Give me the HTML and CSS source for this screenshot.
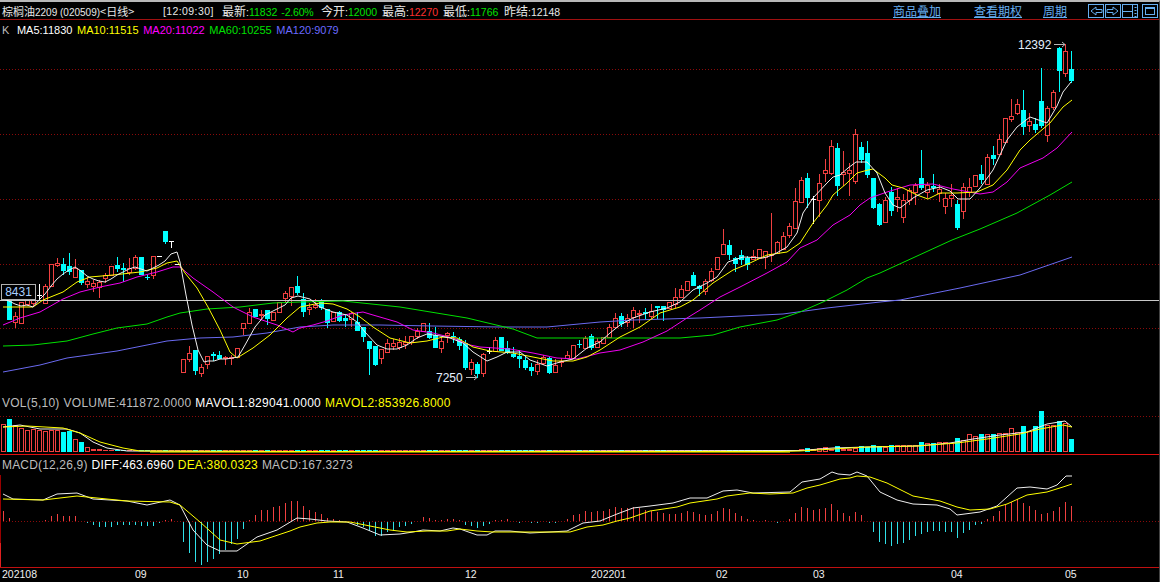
FILE: index.html
```html
<!DOCTYPE html>
<html lang="zh-CN">
<head>
<meta charset="utf-8">
<title>棕榈油2209 日线</title>
<link rel="stylesheet" href="styles.css">
</head>
<body>
<div class="app">
  <header class="top">
    <span class="title"><span class="cn">棕榈油</span><span class="sm">2209 (020509)</span><span class="cn">&lt;日线&gt;</span></span>
    <span class="time">[12:09:30]</span>
    <span class="stat s1"><span class="cn">最新</span>:<b class="up">11832</b><b class="up pct">-2.60%</b></span>
    <span class="stat s2"><span class="cn">今开</span>:<b class="up">12000</b></span>
    <span class="stat s3"><span class="cn">最高</span>:<b class="red">12270</b></span>
    <span class="stat s3"><span class="cn">最低</span>:<b class="up">11766</b></span>
    <span class="stat s3"><span class="cn">昨结</span>:<b class="plain">12148</b></span>
    <nav class="links">
      <a class="link l1">商品叠加</a>
      <a class="link l2">查看期权</a>
      <a class="link l3">周期</a>
    </nav>
    <div class="tools">
      <svg class="tool" viewBox="0 0 16 14"><rect x=".5" y=".5" width="15" height="13"/><path d="M14 5.500H8V3L3 7l5 4V8.500h6z"/></svg>
      <svg class="tool" viewBox="0 0 16 14"><rect x=".5" y=".5" width="15" height="13"/><path d="M2 5.500h6V3l5 4-5 4V8.500H2z"/></svg>
      <svg class="tool" viewBox="0 0 16 14"><rect x=".5" y=".5" width="15" height="13"/><path d="M.5 7.500h10M10.500 .5v13M12.500 3.500h2M12.500 6.500h2M12.500 9.500h2M12.500 12.500h2"/></svg>
      <svg class="tool gap" viewBox="0 0 16 14"><rect x=".5" y=".5" width="15" height="13"/><rect x="3.500" y="3.500" width="9" height="7"/><path d="M3.500 4.500h9"/></svg>
    </div>
  </header>

  <section class="pane">
    <div class="legend ma">
      <span class="gray">K</span>
      <span class="white k1">MA5:11830</span>
      <span class="yellow">MA10:11515</span>
      <span class="magenta">MA20:11022</span>
      <span class="green">MA60:10255</span>
      <span class="blue">MA120:9079</span>
    </div>
    <div class="chart">
      <svg id="main" class="plot main" viewBox="0 39 1159 355"></svg>
      <div class="price">8431</div>
    </div>
  </section>

  <section class="pane">
    <div class="legend ind vol">
      <span class="gray">VOL(5,10)</span>
      <span class="gray">VOLUME:411872.0000</span>
      <span class="white">MAVOL1:829041.0000</span>
      <span class="yellow">MAVOL2:853926.8000</span>
    </div>
    <svg id="vol" class="plot volp" viewBox="0 412 1159 42"></svg>
  </section>

  <section class="pane ruled">
    <div class="legend ind macd">
      <span class="gray">MACD(12,26,9)</span>
      <span class="white">DIFF:463.6960</span>
      <span class="yellow">DEA:380.0323</span>
      <span class="gray">MACD:167.3273</span>
    </div>
    <svg id="macd" class="plot macdp" viewBox="0 475 1159 92"></svg>
  </section>

  <footer class="dates">
    <svg id="dates" class="plot datep" viewBox="0 568 1159 14"></svg>
  </footer>
</div>
<script src="script.js"></script>
</body>
</html>
```

FILE: styles.css
```css
* { box-sizing: border-box; }
html, body { margin: 0; padding: 0; background: #000; }
body { width: 1160px; height: 582px; overflow: hidden; font-family: "Liberation Sans", Arial, sans-serif; }
.app { width: 1160px; height: 582px; background: #000; border-top: 2px solid #b8b8b8; border-right: 1px solid #444; display: flex; flex-direction: column; }

.top { height: 18px; flex: none; border-bottom: 1px solid #a01010; display: flex; align-items: center; padding-left: 2px; color: #e8e8e8; font-size: 10.5px; white-space: nowrap; }
.cn { font-family: "Noto Sans CJK SC", sans-serif; font-size: 12px; }
.title { width: 161px; flex: none; }
.title .cn { font-size: 11px; }
.title .sm { font-size: 10px; }
.time { width: 59px; flex: none; letter-spacing: .4px; }
.stat { flex: none; }
.stat b { font-weight: normal; }
.s1 { width: 99px; }
.s2 { width: 61px; }
.s3 { width: 61px; }
.up { color: #00e000; }
.red { color: #ff3030; }
.plain { color: #e8e8e8; }
.pct { margin-left: 4px; letter-spacing: -.2px; }
.links { display: flex; margin-left: 328px; flex: none; }
.link { color: #66aef0; text-decoration: underline; font-family: "Noto Sans CJK SC", sans-serif; font-size: 12px; line-height: 14px; }
.l1 { width: 81px; }
.l2 { width: 69px; }
.l3 { width: 45px; }
.tools { display: flex; align-items: center; }
.tool { width: 16px; height: 14px; display: block; margin-right: 1px; flex: none; }
.tool rect, .tool path { fill: none; stroke: #66aef0; stroke-width: 1; }
.tool.gap { margin-left: 3px; }

.legend { display: flex; align-items: center; white-space: nowrap; padding-left: 2px; }
.legend.ma { height: 19px; font-size: 11px; gap: 4.6px; }
.k1 { margin-left: 3px; }
.legend.ind { font-size: 12px; gap: 4px; letter-spacing: .17px; }
.legend.vol { height: 18px; letter-spacing: .25px; }
.legend.macd { height: 20px; }
.gray { color: #bdbdbd; }
.white { color: #fff; }
.yellow { color: #ffff00; }
.magenta { color: #ff00ff; }
.green { color: #00e000; }
.blue { color: #6a6aff; }

.chart { position: relative; }
.plot { display: block; width: 1159px; overflow: visible; }
.main { height: 355px; }
.volp { height: 42px; }
.macdp { height: 92px; }
.datep { height: 14px; }
.ruled { border-top: 1px solid #e01010; border-bottom: 1px solid #c01010; }
.price { position: absolute; left: 1px; top: 245px; width: 35px; height: 16px; border: 1px solid #b0b0b0; background: #000; color: #a9cfff; font-size: 12px; line-height: 14px; text-align: center; }

.dot { stroke: #8a0a0a; stroke-width: 1; stroke-dasharray: 1 2; shape-rendering: crispEdges; }
.hline { stroke: #c8c8c8; stroke-width: 1; shape-rendering: crispEdges; }
.wr { stroke: #f04040; stroke-width: 1; shape-rendering: crispEdges; }
.wc { stroke: #00ffff; stroke-width: 1; shape-rendering: crispEdges; }
.wm { stroke: #30e0e8; stroke-width: 1; shape-rendering: crispEdges; }
.ww { stroke: #fff; stroke-width: 1; shape-rendering: crispEdges; }
.br { fill: #000; stroke: #f04040; stroke-width: 1; shape-rendering: crispEdges; }
.bc { fill: #00ffff; shape-rendering: crispEdges; }
.fr { fill: #f04040; shape-rendering: crispEdges; }
.edge { stroke: #900; stroke-width: 1; shape-rendering: crispEdges; }
.edge.on { stroke: #e02020; }
.ln { fill: none; stroke-width: 1; stroke-linejoin: round; }
.l-w { stroke: #eee; }
.l-y { stroke: #ffff00; }
.l-m { stroke: #f000f0; }
.l-g { stroke: #00e000; }
.l-b { stroke: #6a6af0; }
.note { fill: #e4f0ff; font-size: 12px; font-family: "Liberation Sans", Arial, sans-serif; }
.arrow { fill: none; stroke: #b8b8b8; stroke-width: 1; }
.date { fill: #f0f0f0; font-size: 10.5px; font-family: "Liberation Sans", Arial, sans-serif; }
```

FILE: script.js
```js
(function(){
var C = [
['r',286,299],['c',301,320],['r',316,322,312,328],['r',302,323],['r',300,304,298,306],['r',300,303,297,306],['w',295,295,284,300],['r',286,303,284,304],['r',264,286],['r',263,265,258,267],
['c',264,271,258,275],['c',266,272,253,275],['r',268,277,259,277],['c',270,283,270,285],['r',281,284,277,288],['r',283,286,280,292],['r',282,287,280,298],['r',275,278,273,283],['r',266,275],['c',265,269,257,272],
['c',268,270,263,282],['r',268,272,258,275],['r',257,268,255,270],['c',257,275],['c',277,278,275,280],['r',256,275,256,279],['w',256,256],['c',231,242,231,244],['w',241,241,241,247],['w',264,264],
['r',359,372],['r',353,359,346,362],['c',350,371,350,375],['r',367,373,364,377],['r',356,364,356,369],['c',354,356,352,361],['c',355,359,351,359],['r',357,358,356,365],['r',357,358,355,365],['r',348,357],
['r',323,328,323,335],['r',312,323,308,323],['c',309,317],['r',314,315,310,320],['c',310,319,310,325],['r',312,320],['r',302,312],['r',293,298,291,302],['r',287,296,287,306],['c',286,293,276,295],
['c',299,312,293,317],['r',307,309,303,315],['r',305,307,299,309],['c',301,308,299,310],['c',309,323,309,328],['r',312,321],['c',312,321,311,322],['c',318,321,315,327],['r',313,319,312,327],['c',322,331,312,331],
['c',327,337,327,342],['c',341,349,341,375],['c',346,365,346,366],['r',349,358,349,364],['r',343,352,339,352],['r',343,346,339,350],['r',342,347,338,350],['r',342,344,336,349],['r',336,342,336,345],['r',331,336,328,339],
['r',323,331],['c',331,338,323,339],['c',335,348,327,348],['r',341,348,337,353],['r',333,335,332,343],['c',336,337,332,343],['c',339,346,337,350],['c',343,368,340,370],['r',362,369,359,375],['c',364,374,362,378],
['r',354,373,353,377],['w',351,351,347,353],['r',340,351,337,352],['c',337,351],['c',348,353,341,354],['c',354,357,347,358],['c',356,359,350,368],['c',360,368,357,370],['c',367,371,363,376],['r',364,371,360,375],
['r',357,363,355,365],['c',358,373,357,374],['r',365,372,359,373],['r',361,362,358,367],['r',355,358,351,359],['r',345,358],['c',344,345,340,348],['r',338,348,336,349],['c',336,348,334,350],['r',341,347,338,348],
['r',337,343],['r',327,337,324,337],['r',318,327,313,328],['c',316,324,313,327],['r',318,322,314,327],['r',310,317,307,328],['r',313,314,310,323],['c',312,314,308,319],['r',311,316,304,319],['c',306,308,306,319],
['c',306,310,306,321],['r',302,308],['r',297,304,288,308],['r',289,297,285,297],['r',281,290,281,291],['c',275,286,272,286],['c',286,289,285,296],['r',281,291,279,295],['r',271,280,268,282],['r',257,269],
['r',244,254,229,254],['c',245,255,240,260],['c',258,264,257,272],['c',255,260,250,265],['c',258,265,256,270],['r',256,259,250,260],['r',249,258],['r',251,257,251,269],['r',254,255,213,262],['r',242,253,241,254],
['r',236,249,232,249],['r',226,235,223,238],['r',201,228,188,228],['r',180,202,177,202],['c',178,198,173,208],['w',199,199,196,223],['r',183,200,174,217],['r',170,173,159,182],['r',146,173,140,175],['c',148,186,143,196],
['r',172,174,151,186],['r',170,173,163,196],['r',134,181,129,184],['c',147,160,142,163],['c',153,175,141,178],['c',178,208,178,209],['c',204,225,203,226],['r',200,222,197,222],['c',192,211,187,216],['r',197,199,188,212],
['r',200,217,194,223],['r',190,200,188,205],['r',185,192,183,205],['c',178,188,150,190],['r',185,192,182,198],['c',186,188,174,192],['r',189,193,184,202],['r',198,206,193,214],['r',195,198,184,207],['c',204,228,200,230],
['r',187,211,183,219],['r',187,192,178,197],['r',175,186,175,187],['c',174,180,165,184],['r',157,184,154,184],['c',155,159,146,165],['r',139,154,134,155],['r',118,142,118,143],['r',116,119,99,122],['r',104,113,99,115],
['c',110,127,90,135],['r',121,125,113,132],['c',124,130,118,133],['c',101,126,68,128],['r',108,135,106,142],['r',92,107,90,110],['c',48,71,47,92],['r',51,73,44,77],['c',69,81,51,83]
];
var MA5=[3,299,9,301,15,304,21,306,27,305,33,307,39,300,45,294,51,286,57,279,63,274,69,270,75,267,81,271,87,276,93,279,99,281,105,282,111,279,117,275,123,272,129,269,135,267,141,269,147,271,153,268,159,265,165,261,171,254,177,252,180,262,186,295,192,325,198,350,204,362,208,361,214,361,220,359,226,359,238,357,245,345,255,327,265,315,275,310,285,305,291,298,298,296,310,299,320,307,333,312,347,315,357,322,365,332,377,345,387,349,397,349,407,345,417,338,427,334,440,336,450,338,463,343,473,352,487,361,497,357,507,352,520,352,530,360,547,366,560,362,573,359,587,348,600,342,610,333,620,325,633,318,650,312,667,308,680,302,693,290,707,283,717,277,728,262,743,257,763,258,773,255,787,247,797,233,803,213,813,198,827,183,833,177,840,175,848,168,856,162,867,162,877,173,885,193,893,205,900,208,913,198,927,190,940,187,950,191,958,199,970,199,980,188,993,170,1007,140,1017,127,1030,117,1047,123,1057,106,1063,92,1071,82];
var MA10=[3,307,33,307,43,300,63,292,77,282,90,277,113,275,140,272,157,268,167,263,177,261,185,273,197,288,208,307,220,330,230,352,237,358,253,348,270,335,287,318,300,307,320,303,333,304,347,309,360,317,373,327,390,338,410,343,427,341,443,337,457,338,473,347,490,351,513,353,533,357,553,361,573,361,587,357,600,350,620,337,640,327,660,313,680,307,693,300,713,283,733,270,750,263,767,255,787,252,800,243,813,223,827,205,833,195,847,183,857,173,868,170,873,169,885,178,892,185,903,188,917,195,928,199,940,193,957,193,977,192,993,185,1007,170,1020,150,1030,140,1050,123,1063,107,1072,100];
var MA20=[3,325,20,318,40,312,63,299,80,292,100,287,120,283,137,277,157,272,173,267,180,267,193,278,213,292,233,307,253,317,277,325,293,332,300,328,313,325,327,321,343,315,363,312,373,315,397,322,413,330,433,333,453,338,470,345,480,347,510,349,533,353,557,358,577,359,600,353,620,350,643,342,667,331,687,318,700,310,720,297,740,287,767,273,787,262,800,248,817,240,833,225,850,215,860,205,870,198,887,192,910,185,933,184,953,189,980,194,993,192,1007,182,1020,168,1043,158,1057,148,1072,132];
var MA60=[3,346,33,345,67,341,93,334,117,328,147,324,167,317,180,313,207,309,240,307,273,303,300,302,343,301,400,307,467,318,513,329,537,338,600,338,633,338,680,338,713,335,740,327,777,320,800,312,823,302,847,290,867,278,880,273,952,240,980,229,1017,213,1050,195,1072,182];
var MA120=[3,372,40,365,67,358,117,351,167,341,200,338,233,337,267,333,300,327,333,325,380,325,433,326,500,327,547,327,600,322,633,320,700,318,783,314,827,308,880,302,900,300,960,288,1020,275,1072,257];
var VW=[3,427,20,425,40,429,67,429,80,433,93,442,107,448,127,451,300,451.5,800,450.5,833,448,867,447,917,446,950,443,973,439,1000,435,1027,432,1047,424,1065,421,1072,427];
var VY=[3,427,27,426,63,428,80,433,100,442,123,448,140,451,300,451.5,780,451.5,800,451,867,447,917,446,957,443,987,439,1020,434,1040,429,1063,425,1072,427];
var DIFF=[3,494,13,499,43,500,57,494,77,493,93,499,127,501,147,505,170,500,180,505,193,530,207,545,220,551,237,551,257,537,277,530,297,518,310,519,327,521,347,522,363,528,380,535,400,534,413,532,423,530,440,531,453,528,460,529,477,535,487,535,495,531,510,531,530,533,550,532,567,531,583,523,600,521,617,514,633,508,650,506,673,503,690,498,707,498,723,491,737,490,753,493,790,492,802,482,820,479,832,472,838,474,850,475,857,472,867,476,880,492,897,500,913,504,937,505,950,509,957,515,980,512,997,506,1017,488,1030,487,1047,489,1057,485,1066,476,1072,476];
var DEA=[3,499,43,500,77,496,127,501,170,502,180,505,200,522,220,540,237,544,260,541,290,531,300,527,317,523,330,522,350,522,370,526,390,530,407,532,427,531,447,531,460,529,477,531,493,532,517,532,550,532,570,532,587,527,603,525,617,521,630,518,650,511,677,507,690,503,717,499,727,496,750,493,770,494,793,493,807,488,820,485,840,479,850,478,857,476,870,477,887,483,897,488,913,496,940,501,957,507,970,510,990,509,1007,504,1027,495,1047,492,1063,487,1072,484];
var HIST=[10,3,0,0,0,0,0,1,5,7,5,5,5,0,-1,-3,-5,-5,-5,-3,-3,-3,-3,-4,-4,-4,-1,1,2,0,-20,-31,-40,-43,-40,-37,-32,-28,-22,-17,-7,1,6,11,11,14,15,18,20,20,15,11,9,7,3,2,1,0,0,-3,-5,-9,-14,-14,-10,-9,-5,-4,-2,0,4,3,1,1,2,2,1,-3,-4,-6,-4,-2,1,1,2,0,-1,0,-1,-1,0,-1,-1,0,2,6,7,10,9,10,10,12,14,13,13,14,13,11,10,9,8,7,7,8,10,9,7,6,7,10,13,12,8,5,2,1,0,1,0,-1,0,2,8,14,13,11,12,13,17,11,8,5,9,6,0,-10,-20,-22,-24,-22,-21,-18,-14,-12,-10,-9,-9,-10,-10,-16,-11,-8,-3,-2,2,5,10,16,19,22,18,15,11,7,8,10,14,19,15];
var VOLTOP=[424,419,425,428,430,429,430,431,430,430,432,431,439,442,447,449,449,450];
var VEND=[148,144,148,144,142,148,138,146,146,143,138,140,135,138,142,136,136,135,136,136,126,129,128,126,126,128,114,120,102,108,102,102,102,100,100,85,95,78,92,78,33,74,74,63,70,117];
var NS='http://www.w3.org/2000/svg';
function el(p,t,c,a,s){var e=document.createElementNS(NS,t);e.setAttribute('class',c);for(var k in a)e.setAttribute(k,a[k]);if(s)e.textContent=s;p.appendChild(e);return e;}
function X(i){return 3.5+6*i;}
function hl(p,c,y,a,b){el(p,'line',c,{x1:a||0,x2:b||1159,y1:y,y2:y});}
function vl(p,c,x,a,b){el(p,'line',c,{x1:x,x2:x,y1:a,y2:b});}
function poly(p,c,pts){var s=[];for(var i=0;i<pts.length;i+=2)s.push(pts[i]+','+pts[i+1]);el(p,'polyline','ln '+c,{points:s.join(' ')});}
function typeOf(i){return C[i]?C[i][0]:'r';}
var m=document.getElementById('main');
[69,134,199,264,328].forEach(function(y){hl(m,'dot',y+.5);});
C.forEach(function(d,i){
  var t=d[0],x=X(i),a=d[1],b=d[2],h=d[3]===undefined?a:d[3],l=d[4]===undefined?b:d[4];
  if(t==='w'){
    if(l>h)vl(m,'ww',x,h,l+1);
    hl(m,'ww',a+.5,x-2.5,x+2.5);
  }else if(t==='c'){
    if(l>h)vl(m,'wc',x,h,l);
    el(m,'rect','bc',{x:x-2.5,y:a,width:5,height:Math.max(b-a,1)});
  }else{
    if(l>h)vl(m,'wr',x,h,l);
    el(m,'rect','br',{x:x-2,y:a+.5,width:4,height:Math.max(b-a,1)});
  }
});
hl(m,'hline',300.5);
poly(m,'l-b',MA120);poly(m,'l-g',MA60);poly(m,'l-m',MA20);poly(m,'l-y',MA10);poly(m,'l-w',MA5);
el(m,'text','note',{x:1018,y:49},'12392');
el(m,'path','arrow',{d:'M1054 44.5H1065M1062 42l3 2.5-3 2.5'});
el(m,'text','note',{x:436,y:382},'7250');
el(m,'path','arrow',{d:'M466 377.5H477M474 375l3 2.5-3 2.5'});

var v=document.getElementById('vol');
hl(v,'dot',416.5);
for(var i=0;i<179;i++){
  var yt=i<VOLTOP.length?VOLTOP[i]:(i>=133?400+VEND[i-133]/3:450), x=X(i), t=typeOf(i);
  yt=Math.round(yt);
  if(t==='c')el(v,'rect','bc',{x:x-2.5,y:yt,width:5,height:451-yt+(yt>=450?0:1)});
  else if(yt>=449)el(v,'rect','fr',{x:x-2.5,y:yt,width:5,height:451-yt});
  else el(v,'rect','br',{x:x-2,y:yt+.5,width:4,height:451-yt});
}
poly(v,'l-w',VW);poly(v,'l-y',VY);
hl(v,'ln l-y',452,150,790);

var a=document.getElementById('macd');
hl(a,'dot',521.5);
HIST.forEach(function(h,i){
  if(!h)return;
  if(h>0)vl(a,'wr',X(i),521-h,521);else vl(a,'wm',X(i),522,522-h);
});
poly(a,'l-w',DIFF);poly(a,'l-y',DEA);
vl(a,'edge',.5,475,567);vl(a,'edge on',.5,543,567);

var d=document.getElementById('dates');
[[2,'202108'],[135,'09'],[237,'10'],[333,'11'],[465,'12'],[591,'202201'],[716,'02'],[813,'03'],[951,'04'],[1065,'05']].forEach(function(p){
  el(d,'text','date',{x:p[0],y:578},p[1]);
});
})();
```
